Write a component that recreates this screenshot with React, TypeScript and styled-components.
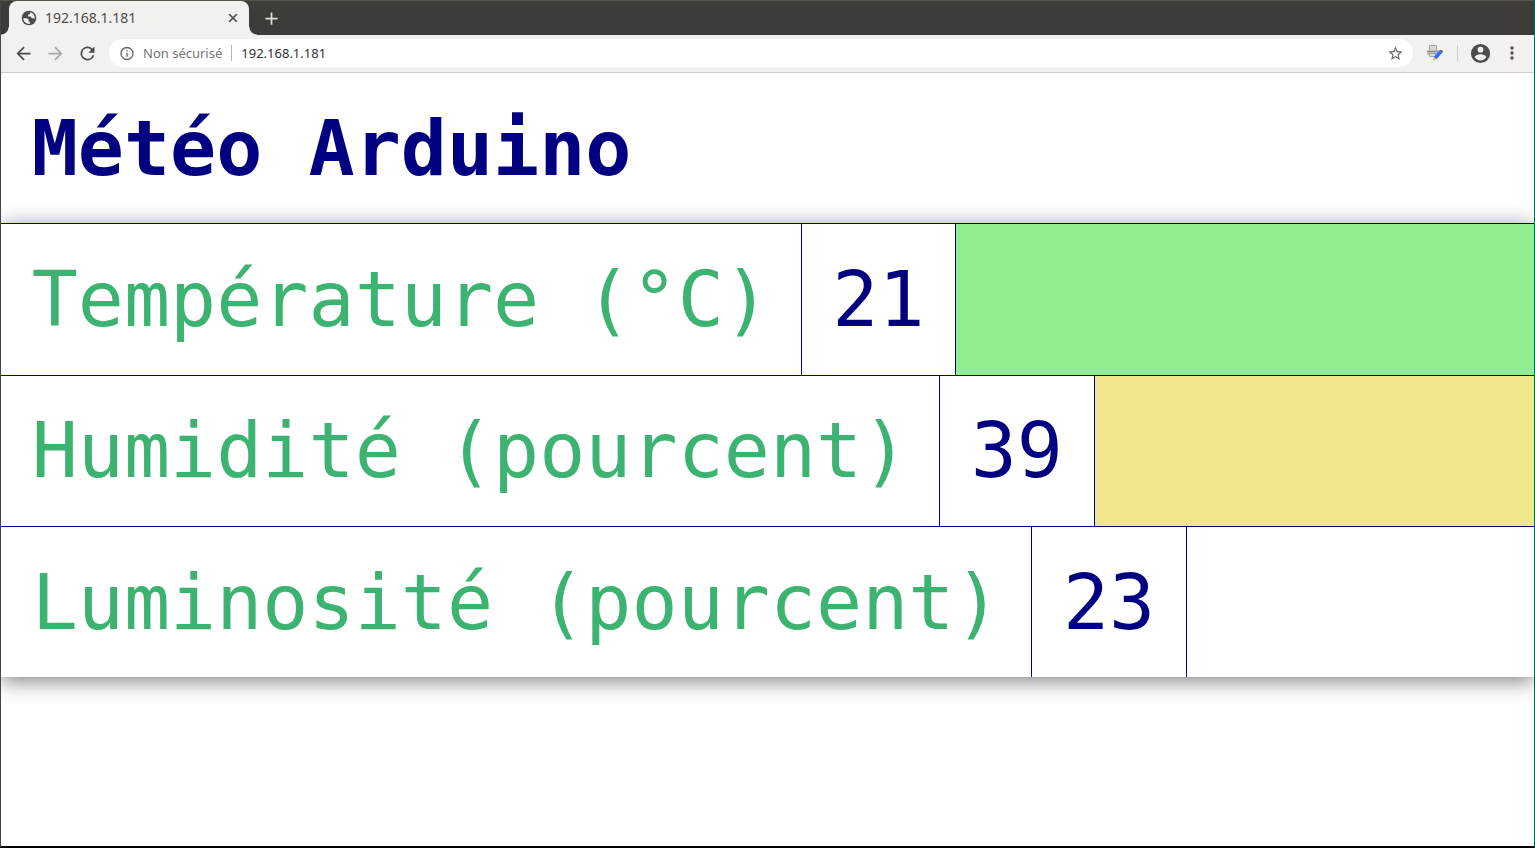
import React from "react";
import styled, { createGlobalStyle } from "styled-components";

const Global = createGlobalStyle`
  *, *::before, *::after { box-sizing: border-box; }
  body { margin: 0; background: #fff; }
  button { border: 0; padding: 0; background: none; cursor: pointer; }
`;

const Window = styled.div`
  min-height: 100vh;
  display: flex;
  flex-direction: column;
  border-left: 1px solid #3c4a45;
  border-right: 1px solid #04694f;
  border-bottom: 2px solid #000;
  font-family: "Noto Sans", "Open Sans", sans-serif;
`;

const TabStrip = styled.div`
  display: flex;
  align-items: center;
  height: 35px;
  padding-left: 8px;
  background: #3e3c38;
  border-top: 1px solid #57554a;
`;

const Tab = styled.div`
  position: relative;
  display: flex;
  align-items: center;
  width: 240px;
  height: 34px;
  padding: 0 9px 0 12px;
  gap: 8px;
  border-radius: 8px 8px 0 0;
  background: #f2f1f0;
  color: #4c4c4c;
  font-size: 14px;

  &::before, &::after {
    content: "";
    position: absolute;
    bottom: 0;
    width: 8px;
    height: 8px;
  }
  &::before { left: -8px; background: radial-gradient(circle at 0 0, #3e3c38 7px, #f2f1f0 8px); }
  &::after { right: -8px; background: radial-gradient(circle at 100% 0, #3e3c38 7px, #f2f1f0 8px); }
`;

const TabTitle = styled.span`
  flex: 1;
  padding-bottom: 2px;
`;

const IconButton = styled.button<{ $size?: number; $color?: string }>`
  display: flex;
  align-items: center;
  justify-content: center;
  flex: none;
  width: ${p => p.$size ?? 32}px;
  height: ${p => p.$size ?? 32}px;
  color: ${p => p.$color ?? "#4c4c4c"};
`;

const NewTab = styled(IconButton)`
  margin-left: 6px;
`;

const Toolbar = styled.div`
  display: flex;
  align-items: center;
  height: 38px;
  padding: 0 6px 1px;
  background: #f2f1f0;
  border-bottom: 1px solid #cfcecd;
`;

const AddressBar = styled.form`
  display: flex;
  align-items: center;
  flex: 1;
  height: 28px;
  margin-left: 6px;
  padding: 0 2px 0 10px;
  border-radius: 14px;
  background: #fff;
  font-size: 13px;
`;

const Security = styled.span`
  margin-left: 8px;
  padding-right: 9px;
  color: #757575;
`;

const Address = styled.input`
  flex: 1;
  min-width: 0;
  padding: 0 0 0 9px;
  border: 0;
  outline: 0;
  background: none;
  color: #333;
  font: inherit;
`;

const Divider = styled.span<{ $color?: string }>`
  width: 1px;
  height: 16px;
  background: ${p => p.$color ?? "#b5b5b5"};
`;

const ToolbarActions = styled.div`
  display: flex;
  align-items: center;
  gap: 6px;
  padding-left: 6px;
`;

const AccountActions = styled(ToolbarActions)`
  gap: 0;
`;

const Page = styled.main`
  flex: 1;
  container-type: inline-size;
  color: navy;
  font-family: "DejaVu Sans Mono", monospace;
  overflow: hidden;
`;

const Title = styled.h1`
  margin: 0;
  padding: 2cqw;
  font-size: 5cqw;
`;

const Readings = styled.section`
  font-size: 5cqw;
  box-shadow: 0 4px 20px rgba(0, 0, 0, 0.5);
`;

const Reading = styled.div<{ $color: string }>`
  display: flex;
  border-top: 1px solid navy;
  background: ${p => p.$color};
`;

const Cell = styled.div`
  padding: 2cqw;
  border-right: 1px solid navy;
  background: #fff;
  white-space: nowrap;
`;

const Label = styled(Cell)`
  color: mediumseagreen;
`;

const readings = [
  { label: "Température (°C)", value: 21, color: "lightgreen" },
  { label: "Humidité (pourcent)", value: 39, color: "khaki" },
  { label: "Luminosité (pourcent)", value: 23, color: "white" },
];

type IconProps = { d: string; size?: number; weight?: number };

const Icon = ({ d, size = 21, weight = 0 }: IconProps) => (
  <svg width={size} height={size} viewBox="0 0 24 24" fill="currentColor" stroke="currentColor" strokeWidth={weight} aria-hidden="true">
    <path d={d} />
  </svg>
);

const paths = {
  back: "M20 11H7.8l5.6-5.6L12 4l-8 8 8 8 1.4-1.4L7.8 13H20z",
  forward: "M4 11h12.2l-5.6-5.6L12 4l8 8-8 8-1.4-1.4 5.6-5.6H4z",
  reload: "M17.65 6.35A8 8 0 1 0 19.73 14h-2.08A6 6 0 1 1 12 6c1.66 0 3.14.69 4.22 1.78L13 11h7V4z",
  close: "M19 6.4 17.6 5 12 10.6 6.4 5 5 6.4 10.6 12 5 17.6 6.4 19 12 13.4 17.6 19 19 17.6 13.4 12z",
  plus: "M19 13h-6v6h-2v-6H5v-2h6V5h2v6h6z",
  info: "M11 7h2v2h-2zm0 4h2v6h-2zm1-9a10 10 0 1 0 0 20 10 10 0 0 0 0-20zm0 18a8 8 0 1 1 0-16 8 8 0 0 1 0 16z",
  star: "m22 9.24-7.19-.62L12 2 9.19 8.63 2 9.24l5.46 4.73L5.82 21 12 17.27 18.18 21l-1.63-7.03zM12 15.4l-3.76 2.27 1-4.28-3.32-2.88 4.38-.38L12 6.1l1.71 4.04 4.38.38-3.32 2.88 1 4.28z",
  account: "M12 2a10 10 0 1 0 0 20 10 10 0 0 0 0-20zm0 3a3 3 0 1 1 0 6 3 3 0 0 1 0-6zm0 14.2a7.2 7.2 0 0 1-6-3.22c.03-1.99 4-3.08 6-3.08s5.97 1.09 6 3.08a7.2 7.2 0 0 1-6 3.22z",
  more: "M12 8a2 2 0 1 0 0-4 2 2 0 0 0 0 4zm0 2a2 2 0 1 0 0 4 2 2 0 0 0 0-4zm0 6a2 2 0 1 0 0 4 2 2 0 0 0 0-4z",
};

const Globe = () => (
  <svg width="16" height="16" viewBox="0 0 16 16" aria-hidden="true">
    <circle cx="8" cy="8" r="7.3" fill="#4c4c4c" />
    <path d="M2.2 8.200h3.600l1.800 1.400v1.600l1.200.6v2.200A6 6 0 0 1 2.200 8.200zM9.200 2.200 9 4 7 5v1.600h2.600l1.200 1.600h1.400l1.600.6A6 6 0 0 0 9.200 2.200z" fill="#f2f1f0" />
  </svg>
);

const Printer = () => (
  <svg width="16" height="16" viewBox="0 0 16 16" aria-hidden="true">
    <path d="M2.500.500h7v5h-7z" fill="#d6d6d6" stroke="#a3a3a3" />
    <path d="M1 5h11l1 1v4H0V6z" fill="#bcbcbc" />
    <path d="M0 6h11v1H0z" fill="#8e8e8e" />
    <path d="M2.500 8.500h6v3h-6z" fill="#dcdcdc" stroke="#a3a3a3" />
    <path d="m12.500 5.500 2.700 2.300-5.700 6.400-2.700-2.200z" fill="#2f6bff" />
    <path d="m12.500 5.500 1.200-.6 2 .6.200 1.400-.7.900z" fill="#4a4f63" />
    <path d="m6.800 12 2.700 2.200L6 15.600z" fill="#d9b44a" />
  </svg>
);

export default function App() {
  return (
    <Window>
      <Global />
      <TabStrip>
        <Tab>
          <Globe />
          <TabTitle>192.168.1.181</TabTitle>
          <IconButton $size={14} aria-label="Fermer l'onglet"><Icon d={paths.close} size={14} weight={1} /></IconButton>
        </Tab>
        <NewTab $color="#dedcd4" aria-label="Nouvel onglet"><Icon d={paths.plus} /></NewTab>
      </TabStrip>
      <Toolbar>
        <IconButton aria-label="Retour"><Icon d={paths.back} /></IconButton>
        <IconButton $color="#aaa9a7" aria-label="Avancer"><Icon d={paths.forward} /></IconButton>
        <IconButton aria-label="Actualiser"><Icon d={paths.reload} /></IconButton>
        <AddressBar onSubmit={e => e.preventDefault()}>
          <IconButton type="button" $size={16} $color="#666" aria-label="Informations"><Icon d={paths.info} size={17} /></IconButton>
          <Security>Non sécurisé</Security>
          <Divider />
          <Address aria-label="Adresse" defaultValue="192.168.1.181" />
          <IconButton type="button" $color="#666" aria-label="Favori"><Icon d={paths.star} size={17} /></IconButton>
        </AddressBar>
        <ToolbarActions>
          <IconButton aria-label="Imprimer"><Printer /></IconButton>
          <Divider $color="#cfcecd" />
        </ToolbarActions>
        <AccountActions>
          <IconButton aria-label="Profil"><Icon d={paths.account} size={23} /></IconButton>
          <IconButton aria-label="Menu"><Icon d={paths.more} size={20} /></IconButton>
        </AccountActions>
      </Toolbar>
      <Page>
        <Title>Météo Arduino</Title>
        <Readings>
          {readings.map(r => (
            <Reading key={r.label} $color={r.color}>
              <Label>{r.label}</Label>
              <Cell>{r.value}</Cell>
            </Reading>
          ))}
        </Readings>
      </Page>
    </Window>
  );
}
